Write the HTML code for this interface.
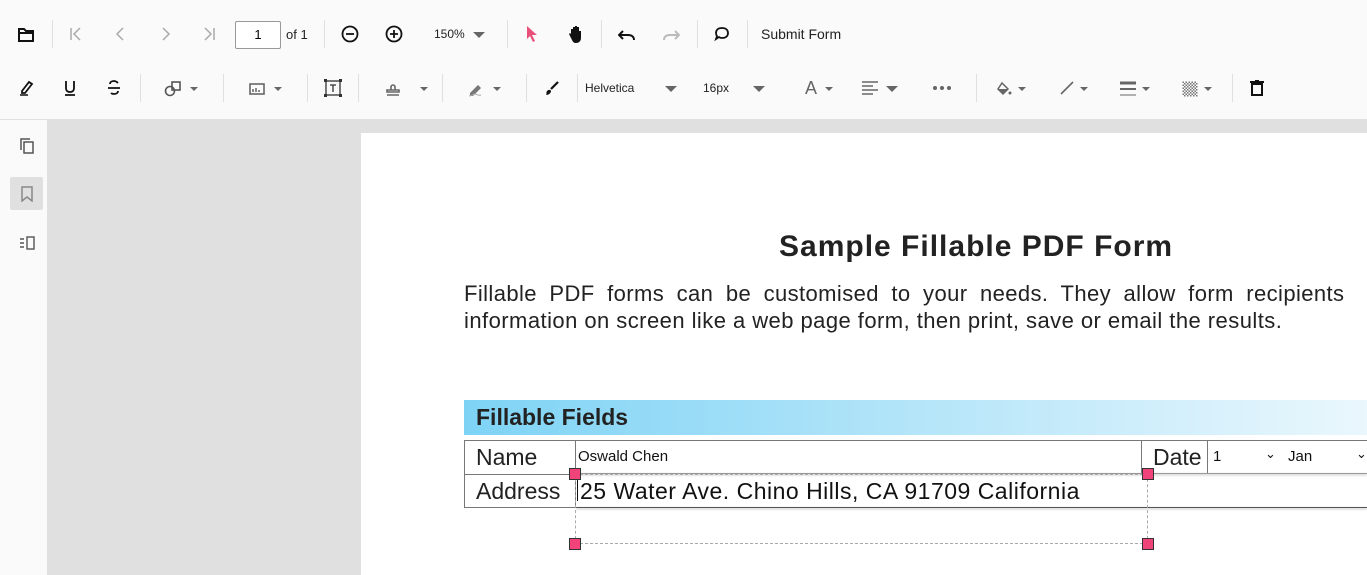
<!DOCTYPE html><html><head><style>
body{margin:0;width:1367px;height:575px;overflow:hidden;font-family:"Liberation Sans",sans-serif;background:#e0e0e0;position:relative}
.a{position:absolute}
.tb{left:0;top:0;width:1367px;height:119px;background:#fafafa;border-bottom:1px solid #e0e0e0}
.sep{position:absolute;width:1px;height:28px;background:#e0e0e0}
.ic{position:absolute;transform:translate(-50%,-50%)}
.dd{position:absolute;width:0;height:0;border-left:4px solid transparent;border-right:4px solid transparent;border-top:4px solid #666}
.dl{position:absolute;width:0;height:0;border-left:6px solid transparent;border-right:6px solid transparent;border-top:6px solid #666}
.t{position:absolute;font-size:13px;color:#222}
</style></head><body>
<div class="a tb"></div>
<!-- row1 -->
<svg class="ic" style="left:26px;top:35px" width="18" height="16" viewBox="0 0 18 16"><path d="M2 2h5l2 2h7v10H2z" fill="none" stroke="#111" stroke-width="2"/><path d="M2 6h14" stroke="#111" stroke-width="2"/></svg>
<div class="sep" style="left:52px;top:20px"></div>
<svg class="ic" style="left:76px;top:34px" width="14" height="14"><path d="M2 1v12M11 1L5 7l6 6" fill="none" stroke="#aaa" stroke-width="1.5"/></svg>
<svg class="ic" style="left:121px;top:34px" width="14" height="14"><path d="M9 1L3 7l6 6" fill="none" stroke="#aaa" stroke-width="1.5"/></svg>
<svg class="ic" style="left:165px;top:34px" width="14" height="14"><path d="M5 1l6 6-6 6" fill="none" stroke="#aaa" stroke-width="1.5"/></svg>
<svg class="ic" style="left:209px;top:34px" width="14" height="14"><path d="M12 1v12M3 1l6 6-6 6" fill="none" stroke="#aaa" stroke-width="1.5"/></svg>
<div class="a" style="left:235px;top:21px;width:44px;height:26px;border:1px solid #999;border-radius:2px;background:#fff;font-size:13px;text-align:center;line-height:26px">1</div>
<div class="t" style="left:286px;top:27px">of 1</div>
<div class="sep" style="left:324px;top:20px"></div>
<svg class="ic" style="left:350px;top:34px" width="18" height="18"><circle cx="9" cy="9" r="7.5" fill="none" stroke="#111" stroke-width="1.8"/><path d="M5 9h8" stroke="#111" stroke-width="1.8"/></svg>
<svg class="ic" style="left:394px;top:34px" width="18" height="18"><circle cx="9" cy="9" r="7.5" fill="none" stroke="#111" stroke-width="1.8"/><path d="M5 9h8M9 5v8" stroke="#111" stroke-width="1.8"/></svg>
<div class="t" style="left:434px;top:27px;font-size:12px">150%</div>
<div class="dl" style="left:473px;top:32px"></div>
<div class="sep" style="left:507px;top:20px"></div>
<svg class="ic" style="left:532px;top:34px" width="12" height="18"><path d="M1 1l10 9H6l3 6-2 1-3-6-3 3z" fill="#e8507a"/></svg>
<svg class="ic" style="left:576px;top:34px" width="16" height="18"><path d="M3 9V4h2v4-6h2v6-7h2v7-6h2v7-3h2v7c0 3-2 5-5 5H8c-2 0-3-1-4-3L1 9l1-1 2 2z" fill="#111"/></svg>
<div class="sep" style="left:601px;top:20px"></div>
<svg class="ic" style="left:627px;top:35px" width="18" height="12"><path d="M5 2L1 6l4 4" fill="none" stroke="#111" stroke-width="2"/><path d="M1 6h9c4 0 6 2 6 5" fill="none" stroke="#111" stroke-width="2"/></svg>
<svg class="ic" style="left:671px;top:35px" width="18" height="12"><path d="M13 2l4 4-4 4" fill="none" stroke="#bbb" stroke-width="2"/><path d="M17 6H8c-4 0-6 2-6 5" fill="none" stroke="#bbb" stroke-width="2"/></svg>
<div class="sep" style="left:697px;top:20px"></div>
<svg class="ic" style="left:722px;top:34px" width="16" height="16"><path d="M8 2c4 0 6 2 6 5s-2 5-6 5c-1 0-2 0-3-1l-3 2 1-3C2 9 2 8 2 7c0-3 2-5 6-5z" fill="none" stroke="#111" stroke-width="1.8"/></svg>
<div class="sep" style="left:747px;top:20px"></div>
<div class="t" style="left:761px;top:26px;font-size:14px">Submit Form</div>
<!-- row2 -->
<svg class="ic" style="left:26px;top:88px" width="16" height="16"><path d="M4 11l7-9 3 2-7 9H4z" fill="none" stroke="#111" stroke-width="1.8"/><path d="M2 15h8" stroke="#111" stroke-width="1.5"/></svg>
<svg class="ic" style="left:70px;top:88px" width="14" height="16"><path d="M3 1v7c0 3 2 4 4 4s4-1 4-4V1M2 15h10" fill="none" stroke="#111" stroke-width="1.8"/></svg>
<svg class="ic" style="left:114px;top:88px" width="14" height="16"><path d="M11 3c-1-1-2-2-4-2S3 2 3 4M1 8h12M4 13c1 1 2 1 3 1 2 0 4-1 4-3" fill="none" stroke="#111" stroke-width="1.8"/></svg>
<div class="sep" style="left:140px;top:74px"></div>
<svg class="ic" style="left:173px;top:89px" width="18" height="16"><circle cx="6" cy="10" r="4.5" fill="none" stroke="#555" stroke-width="1.6"/><rect x="8" y="1" width="8" height="8" fill="none" stroke="#555" stroke-width="1.6"/></svg>
<div class="dd" style="left:190px;top:87px"></div>
<div class="sep" style="left:223px;top:74px"></div>
<svg class="ic" style="left:257px;top:89px" width="16" height="12"><rect x="1" y="1" width="14" height="10" fill="none" stroke="#666" stroke-width="1.6"/><path d="M4 9V6M7 9V5M10 9V7" stroke="#666" stroke-width="1.5"/></svg>
<div class="dd" style="left:274px;top:87px"></div>
<div class="sep" style="left:307px;top:74px"></div>
<svg class="ic" style="left:333px;top:88px" width="18" height="18"><rect x="2" y="2" width="14" height="14" fill="none" stroke="#333" stroke-width="1.3"/><rect x="0" y="0" width="3" height="3" fill="#333"/><rect x="15" y="0" width="3" height="3" fill="#333"/><rect x="0" y="15" width="3" height="3" fill="#333"/><rect x="15" y="15" width="3" height="3" fill="#333"/><path d="M6 6h6M9 6v7" stroke="#333" stroke-width="1.3"/></svg>
<div class="sep" style="left:358px;top:74px"></div>
<svg class="ic" style="left:393px;top:89px" width="16" height="16"><path d="M6 9V6a2 2 0 1 1 4 0v3M2 9h12v2H2zM2 14h12" fill="none" stroke="#666" stroke-width="1.6"/></svg>
<div class="dd" style="left:420px;top:87px"></div>
<div class="sep" style="left:442px;top:74px"></div>
<svg class="ic" style="left:476px;top:89px" width="18" height="16"><path d="M3 12l8-8 3 3-8 8H3z" fill="#777"/><path d="M2 15c3 0 4-2 6-2s2 2 6 1" fill="none" stroke="#aaa" stroke-width="1"/></svg>
<div class="dd" style="left:493px;top:87px"></div>
<div class="sep" style="left:526px;top:74px"></div>
<svg class="ic" style="left:552px;top:88px" width="16" height="16"><path d="M14 2L7 9" stroke="#111" stroke-width="2.2"/><path d="M3 11c2-2 4-1 4 0 0 2-2 4-5 4 1-1 0-3 1-4z" fill="#111"/></svg>
<div class="sep" style="left:577px;top:74px"></div>
<div class="t" style="left:585px;top:81px;font-size:12px">Helvetica</div>
<div class="dl" style="left:665px;top:86px"></div>
<div class="t" style="left:703px;top:81px;font-size:12px">16px</div>
<div class="dl" style="left:753px;top:86px"></div>
<div class="t" style="left:805px;top:78px;font-size:18px;color:#666">A</div>
<div class="dd" style="left:825px;top:87px"></div>
<svg class="ic" style="left:870px;top:88px" width="16" height="14"><path d="M0 1h16M0 5h11M0 9h16M0 13h11" stroke="#666" stroke-width="1.6"/></svg>
<div class="dl" style="left:886px;top:86px"></div>
<svg class="ic" style="left:942px;top:88px" width="18" height="4"><circle cx="2" cy="2" r="2" fill="#666"/><circle cx="9" cy="2" r="2" fill="#666"/><circle cx="16" cy="2" r="2" fill="#666"/></svg>
<div class="sep" style="left:976px;top:74px"></div>
<svg class="ic" style="left:1004px;top:89px" width="16" height="14"><path d="M6 1l6 6-5 5-5-5z" fill="none" stroke="#666" stroke-width="1.5"/><path d="M2 7h10l-5 5z" fill="#666"/><circle cx="14" cy="11" r="1.5" fill="#666"/></svg>
<div class="dd" style="left:1018px;top:87px"></div>
<svg class="ic" style="left:1067px;top:88px" width="14" height="14"><path d="M13 1L1 13" stroke="#666" stroke-width="1.6"/></svg>
<div class="dd" style="left:1080px;top:87px"></div>
<svg class="ic" style="left:1128px;top:89px" width="16" height="16"><path d="M0 2h16" stroke="#666" stroke-width="3"/><path d="M0 8h16" stroke="#666" stroke-width="2"/><path d="M0 14h16" stroke="#666" stroke-width="1"/></svg>
<div class="dd" style="left:1142px;top:87px"></div>
<svg class="ic" style="left:1190px;top:89px" width="15" height="15"><defs><pattern id="p" width="3" height="3" patternUnits="userSpaceOnUse"><rect width="1.5" height="1.5" fill="#777"/><rect x="1.5" y="1.5" width="1.5" height="1.5" fill="#777"/></pattern></defs><rect width="15" height="15" fill="url(#p)"/></svg>
<div class="dd" style="left:1204px;top:87px"></div>
<div class="sep" style="left:1232px;top:74px"></div>
<svg class="ic" style="left:1257px;top:88px" width="14" height="16"><path d="M0 2h14M5 0h4" stroke="#111" stroke-width="2"/><rect x="2" y="4" width="10" height="11" fill="none" stroke="#111" stroke-width="2"/></svg>
<!-- sidebar -->
<div class="a" style="left:0;top:120px;width:47px;height:455px;background:#fafafa;border-right:1px solid #e0e0e0"></div>
<svg class="ic" style="left:27px;top:146px" width="16" height="16"><rect x="5" y="4" width="9" height="11" fill="none" stroke="#555" stroke-width="1.5"/><path d="M2 12V1h9" fill="none" stroke="#555" stroke-width="1.5"/></svg>
<div class="a" style="left:10px;top:177px;width:33px;height:33px;background:#e0e0e0;border-radius:2px"></div>
<svg class="ic" style="left:27px;top:194px" width="12" height="16"><path d="M1 1h10v14l-5-4-5 4z" fill="none" stroke="#888" stroke-width="1.5"/></svg>
<svg class="ic" style="left:27px;top:243px" width="16" height="14"><rect x="8" y="1" width="7" height="12" fill="none" stroke="#555" stroke-width="1.4"/><path d="M1 3h4M1 7h4M1 11h4" stroke="#555" stroke-width="1.4"/></svg>
<!-- page -->
<div class="a" style="left:361px;top:133px;width:1006px;height:442px;background:#fff"></div>
<div class="a" style="left:779px;top:230px;font-size:30px;font-weight:bold;color:#222;letter-spacing:1px;white-space:nowrap">Sample Fillable PDF Form</div>
<div class="a" style="left:464px;top:281px;font-size:22px;color:#222;white-space:nowrap;word-spacing:6px;letter-spacing:0.4px">Fillable PDF forms can be customised to your needs. They allow form recipients</div>
<div class="a" style="left:464px;top:308px;font-size:22px;color:#222;white-space:nowrap;letter-spacing:0.45px">information on screen like a web page form, then print, save or email the results.</div>
<div class="a" style="left:464px;top:400px;width:903px;height:35px;background:linear-gradient(90deg,#7ed3f5,#eaf7fd)"></div>
<div class="a" style="left:476px;top:404px;font-size:23px;font-weight:bold;color:#222">Fillable Fields</div>
<div class="a" style="left:464px;top:440px;width:903px;height:68px;border:1px solid #777;border-right:none;box-sizing:border-box"></div>
<div class="a" style="left:464px;top:474px;width:112px;height:1px;background:#777"></div>
<div class="a" style="left:575px;top:440px;width:1px;height:68px;background:#777"></div>
<div class="a" style="left:1141px;top:440px;width:1px;height:34px;background:#777"></div>
<div class="a" style="left:1207px;top:440px;width:1px;height:34px;background:#777"></div>
<div class="a" style="left:576px;top:473px;width:791px;height:1px;background:#999;box-shadow:0 1px 2px #aaa"></div>
<div class="a" style="left:576px;top:507px;width:791px;height:1px;background:#555;box-shadow:0 1px 2px #aaa"></div>
<div class="a" style="left:476px;top:444px;font-size:23px;color:#222">Name</div>
<div class="a" style="left:476px;top:478px;font-size:23px;color:#222">Address</div>
<div class="a" style="left:1153px;top:444px;font-size:23px;color:#222">Date</div>
<div class="a" style="left:578px;top:448px;font-size:15px;color:#111">Oswald Chen</div>
<div class="a" style="left:1213px;top:448px;font-size:15px;color:#111">1</div>
<div class="a" style="left:1265px;top:446px;font-size:13px;color:#111">⌄</div>
<div class="a" style="left:1288px;top:448px;font-size:15px;color:#111">Jan</div>
<div class="a" style="left:1356px;top:446px;font-size:13px;color:#111">⌄</div>
<div class="a" style="left:577px;top:479px;width:1px;height:22px;background:#111"></div>
<div class="a" style="left:580px;top:478px;font-size:23px;color:#111;letter-spacing:0.5px;white-space:nowrap">25 Water Ave. Chino Hills, CA 91709 California</div>
<div class="a" style="left:575px;top:474px;width:573px;height:70px;border:1px dashed #aaa;box-sizing:border-box"></div>
<div class="a" style="left:569px;top:468px;width:12px;height:12px;background:#f0437a;border:1px solid #333;box-sizing:border-box"></div>
<div class="a" style="left:1142px;top:468px;width:12px;height:12px;background:#f0437a;border:1px solid #333;box-sizing:border-box"></div>
<div class="a" style="left:569px;top:538px;width:12px;height:12px;background:#f0437a;border:1px solid #333;box-sizing:border-box"></div>
<div class="a" style="left:1142px;top:538px;width:12px;height:12px;background:#f0437a;border:1px solid #333;box-sizing:border-box"></div>
</body></html>
